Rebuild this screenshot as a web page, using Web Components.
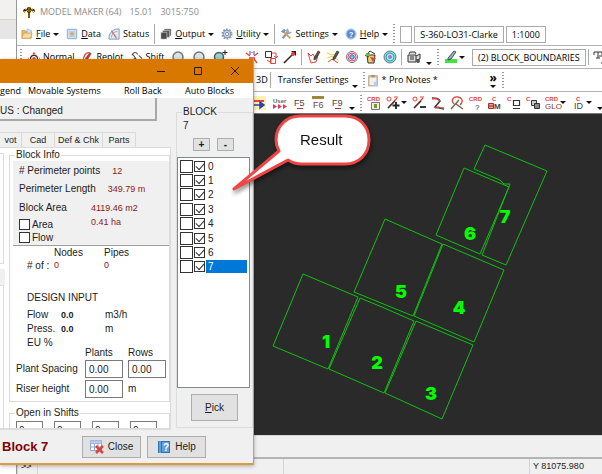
<!DOCTYPE html>
<html lang="en">
<head>
<meta charset="utf-8">
<title>MODEL MAKER (64)</title>
<style>
html,body{height:100%;margin:0}
body{overflow:hidden;background:#fff;color:#1c1c1c;font:10px/12px "Liberation Sans",Arial,sans-serif;--ui:9px/12px "Open Sans","Noto Sans",sans-serif}
</style>
</head>
<body>
<desk-top></desk-top>
<script>
const define = (name, html, setup) => {
  const tpl = document.createElement('template');
  tpl.innerHTML = '<style>*{box-sizing:border-box}</style>' + html;
  customElements.define(name, class extends HTMLElement {
    constructor() {
      super();
      this.attachShadow({mode: 'open'}).append(tpl.content.cloneNode(true));
    }
    connectedCallback() { if (setup) setup(this, this.shadowRoot); }
  });
};

const pencil = '<path d="M7 8 11 1l2 1-4 7-2 1z" fill="#555" stroke="#222" stroke-width=".6"/>';
const crd = '<text x="0" y="5" font-size="6" font-weight="700" fill="#e8443c">CRD</text>';
const cc = '<text x="0" y="5" font-size="6" font-weight="700" fill="#e8443c">C</text>';
const ICONS = {
  palm: '<path d="M6 5h2v8H6z" fill="#7a5a00"/><path d="M1 7c0-3 2-4 4-3C5 1 9 1 9 4c3-1 4 0 4 3-2-2-3-1-4-1 0 1-1 2-2 2S5 7 5 6C3 6 2 6 1 7z" fill="#2d2400"/><path d="M3 4l3 2M11 4 8 6M7 2v5M2 8l2-2M12 8l-2-2" stroke="#d9a000" fill="none"/>',
  folder: '<path d="M1 12V3h4l1 1h6v8z" fill="#e9b765" stroke="#c08a3c" stroke-width=".7"/><path d="M7 1l5 2v4H7z" fill="#cfe3f5" stroke="#7aa6cf" stroke-width=".6"/><path d="M1 12 3 6h10l-2 6z" fill="#fbdc9c" stroke="#c9984c" stroke-width=".7"/>',
  data: '<rect x="1.500" y="1.500" width="11" height="11" rx="1" fill="#d9e8f8" stroke="#7c9fcb"/><path d="M3 3h8v8H3z" fill="#b8d2f0"/><circle cx="7" cy="7" r="2" fill="#f5a430"/>',
  status: '<path d="M1 13A11 11 0 0 1 13 1v12z" fill="#dfeafa" stroke="#7293c0"/><path d="M4 11a7 7 0 0 1 7-7" fill="none" stroke="#8aa9d4"/><path d="M4 3l6 9" stroke="#e06a5c" stroke-width="1.500"/>',
  output: '<path d="M5 1h8v8H5z" fill="#777"/><path d="M3 3h8v8H3z" fill="#555" stroke="#ddd" stroke-width=".6"/><path d="M1 5h7v8H1z" fill="#4a4a4a" stroke="#eee" stroke-width=".6"/>',
  gear: '<circle cx="7" cy="7" r="5.500" fill="none" stroke="#8798b3" stroke-width="2" stroke-dasharray="2 1.450"/><circle cx="7" cy="7" r="4.500" fill="#c8d6ea" stroke="#7186a6"/><circle cx="7" cy="7" r="2" fill="#fff" stroke="#7186a6"/>',
  tools: '<path d="M3 12 10 4" stroke="#7f96b5" stroke-width="2.500"/><path d="M9 1a3 3 0 1 0 4 4l-2 0-1-1z" fill="#9fb3cd" stroke="#6d83a4" stroke-width=".5"/><path d="M4 4l8 8" stroke="#d99c4e" stroke-width="2"/><path d="M1 4l4-3 2 2-3 3z" fill="#8495ac"/>',
  help: '<circle cx="7" cy="7" r="6" fill="#8fb2e2" stroke="#b9cbe4"/><circle cx="7" cy="7" r="4.500" fill="#5785cc"/><text x="7" y="10" text-anchor="middle" font-size="9" font-weight="700" fill="#fff">?</text>',
  normal: '<circle cx="7" cy="9" r="4" fill="none" stroke="#333" stroke-width="1.500"/><circle cx="7" cy="9" r="2" fill="#e8443c"/><path d="M7 1 9 4H5zM1 7v4l-1-2zM13 7v4l1-2z" fill="#e8443c"/>',
  replot: '<path d="M3 12C2 6 6 1 10 2" fill="none" stroke="#e8443c" stroke-width="1.500"/><path d="M5 9 10 2l2 1-5 8z" fill="#c33" stroke="#333" stroke-width=".5"/>',
  shift: '<path d="M1 5c2-4 5-4 7-1M3 8l8 5M2 4l4 5M9 5l4 4" fill="none" stroke="#555" stroke-width="1.200"/>',
  lens: '<circle cx="7" cy="7" r="5" fill="#d6e6e6" stroke="#777" stroke-width="1.500"/>',
  lensplus: '<circle cx="6" cy="7" r="4.500" fill="#8fd3d3" stroke="#555" stroke-width="1.500"/><path d="M12 0v5M9.500 2.500h5" stroke="#222"/>',
  burst: '<path d="M1 3l4 3M13 3 9 6M2 13l3-4M12 13l-3-4M4 8h6" stroke="#e8443c" fill="none" stroke-width="1.300"/><path d="M5 1v4M9 1v4M7 2v1" stroke="#3c48d8"/>',
  copybox: '<path d="M1.500 1.500h6v6h-6z" fill="#fff" stroke="#333"/><path d="M8 3h4v4M12 8l-2-2M12 8l2-2M6.500 8.500h5v5h-5z" fill="none" stroke="#e8443c"/><path d="M7 9v4M3 10l3 2" stroke="#e8443c"/>',
  arrow: '<path d="M1 13 10 4" stroke="#222" stroke-width="1.500"/><path d="M13 1v5L8 1z" fill="#222"/><circle cx="10" cy="4" r="2" fill="#e8443c"/><path d="M1 11l2 2" stroke="#e8443c"/>',
  poly: '<path d="M1 3l3 3 2-2 2 4 3-3-2 7-5 1z" fill="none" stroke="#e8443c"/>' + pencil,
  lines: '<path d="M1 3l5 2 6-2M1 8l5-2 6 4" stroke="#e8d23c" fill="none"/><path d="M2 12l4-3 6 4" stroke="#e8443c" fill="none"/>' + pencil,
  target: '<circle cx="7" cy="7" r="5.500" fill="#fff" stroke="#806a90"/><circle cx="7" cy="7" r="4" fill="none" stroke="#e8443c"/><circle cx="7" cy="7" r="2.300" fill="#7fb8f0" stroke="#3c60c8"/>',
  bucket: '<path d="M3 5h8l-1 8H4z" fill="#e6d069" stroke="#333"/><path d="M3 4l3-3 5 3M1 5l4 2" stroke="#333" fill="none"/><path d="M6 7l6 1-3 4z" fill="#e8443c"/><path d="M2 3h4v3H2z" fill="#79b04c"/>',
  disc: '<circle cx="7" cy="7" r="6" fill="#71dcd4" stroke="#6a7f88"/><circle cx="7" cy="7" r="4" fill="#a9ecdf" stroke="#459ec4"/><circle cx="7" cy="7" r="2" fill="#9c7be0"/>',
  camera: '<path d="M1 5h8v7H1zM2 4l1-2h5l1 2M9 6l4-2v5l-4 1" fill="#ddd" stroke="#333"/><path d="M3 7h4M3 9h4" stroke="#333"/><circle cx="11" cy="11" r="2" fill="#555"/>',
  pen: '<path d="M1 9h12v4H1z" fill="#3ee63e"/><path d="M4 8 10 1l2 1-5 7-3 1z" fill="#9ab" stroke="#334" stroke-width=".8"/>',
  tt: '<path d="M1 2h8v3M1 2v3M5 2v6M3 8h4M6 6h7M10 6v7M8 13h4" stroke="#333" fill="none"/>',
  clip: '<rect x="2" y="2" width="10" height="12" fill="#e0b47c" stroke="#b58b56" stroke-width=".7"/><path d="M3 4h8v9H3z" fill="#eef3fa"/><path d="M5 1h4v3H5z" fill="#8b9bb0"/><path d="M8 9h4v5H8z" fill="#b9cdea"/>',
  swap: '<path d="M0 0h12v14H0z" fill="#fff3b0"/><path d="M0 5h10" stroke="#e8443c" stroke-width="2"/><path d="M0 9h7M6 6l4 3-4 3z" stroke="#2c3fb8" stroke-width="1.500" fill="#2c3fb8"/>',
  user: '<text x="0" y="7" font-size="6" font-weight="700" fill="#666">User</text><path d="M0 8l4 2.500L0 13zM5 8l4 2.500L5 13zM10 8l4 2.500-4 2.500z" fill="#e8345c"/>',
  f5: '<text x="2" y="10" font-size="9" fill="#444">F5</text><path d="M5 12.500h6" stroke="#a33"/>',
  f6: '<path d="M1 0h12v3H1z" fill="#9b8a3c"/><text x="2" y="12" font-size="9" fill="#744">F6</text>',
  f9: '<text x="2" y="10" font-size="9" fill="#444">F9</text><path d="M5 12.500h6" stroke="#a33"/>',
  crdbox: crd + '<path d="M4.500 6.500h8v7h-8z" fill="#eef" stroke="#776"/><path d="M7 8h3v4H7z" fill="#7a9a1c"/>',
  slashplus: '<path d="M2 12 11 2" stroke="#e8443c" stroke-width="1.300"/><circle cx="3" cy="3" r="2" fill="none" stroke="#e8443c"/><path d="M8 1h4" stroke="#e8443c"/><path d="M2 12 9 5" stroke="#333" stroke-width="1.300"/><path d="M10 6v7M6.500 9.500h7" stroke="#222" stroke-width="1.800"/>',
  slashminus: '<path d="M2 12 11 2" stroke="#e8443c" stroke-width="1.300"/><circle cx="3" cy="3" r="2" fill="none" stroke="#e8443c"/><path d="M8 1h4" stroke="#e8443c"/><path d="M2 12 9 5" stroke="#333" stroke-width="1.300"/><path d="M8 11h6" stroke="#222" stroke-width="1.800"/>',
  zig: '<path d="M1 2c4 0 7 0 8 3L4 11l9 2" stroke="#333" fill="none" stroke-width="1.500"/><path d="M1 3c3-1 6 0 8 2M4 12l4-1M10 12h3" stroke="#e8443c" fill="none" stroke-width="1.500"/>',
  loop: '<path d="M4 8C0 4 4 0 8 1s6 4 2 8" fill="none" stroke="#e8443c" stroke-width="1.300"/><path d="M1 13 9 4M6 8l7 5" stroke="#664" stroke-width="1.300"/>',
  ask: crd + '<text x="6" y="14" font-size="8" fill="#333">?</text>',
  bm: '<text x="4" y="5" font-size="6" font-weight="700" fill="#e8443c">C</text><path d="M.5 7.500h5v5h-5zM1 10h5" fill="#e99" stroke="#933"/><text x="6" y="13" font-size="8" font-weight="700" fill="#444">M</text>',
  cbox: cc + '<path d="M6.500 4.500h6v5h-6zM6 12.500h7" fill="none" stroke="#333" stroke-width="1.200"/>',
  cstack: cc + '<path d="M5.500 4.500h5v5h-5z" fill="#ccc" stroke="#333"/><path d="M8.500 7.500h5v5h-5z" fill="#888" stroke="#333"/>',
  glo: crd + '<text x="0" y="13" font-size="8" fill="#833">GLO</text>',
  cid: '<text x="5" y="5" font-size="6" font-weight="700" fill="#e8443c">C</text><text x="3" y="13" font-size="9" fill="#444">ID</text>',
  gridx: '<path d="M.5.500h11v10H.5zM.5 3.500h11M.5 7h11M4.500.500v10M8 .5v10" fill="#fff" stroke="#8aa4d6"/><path d="M.5.500h11v3H.5z" fill="#b9cbee"/><path d="M6 6l7 7M13 6l-7 7" stroke="#d6453c" stroke-width="2.500"/>',
  book: '<path d="M1 1h12v12H1z" fill="#2f74b8"/><path d="M3 1v12" stroke="#9cc4ea"/><path d="M5 2h7v10H5z" fill="#5f9fdb"/><text x="9" y="11" text-anchor="middle" font-size="10" font-weight="700" fill="#fff">?</text>'
};

define('ui-icon', `<style>
  :host{display:inline-block;flex:none;width:14px;height:14px}
  svg{display:block;width:100%;height:100%;overflow:visible;font-family:"Liberation Sans",Arial,sans-serif}
</style><svg viewBox="0 0 14 14" aria-hidden="true"></svg>`,
(el, root) => { root.querySelector('svg').innerHTML = ICONS[el.getAttribute('name')] || ''; });

define('menu-button', `<style>
  :host{display:block;flex:none}
  ::slotted(ui-icon){width:12px}
  button{display:flex;align-items:center;gap:3px;border:0;background:none;padding:0;margin:0;font:inherit;color:inherit;white-space:nowrap}
  i{display:none;border:3px solid transparent;border-top-color:#111;border-bottom:0}
  :host([drop]) i{display:block}
</style><button type="button"><slot name="icon"></slot><span><slot></slot></span><i></i></button>`);

define('tool-button', `<style>
  :host{display:block;flex:none;width:19px}
  :host([drop]){width:26px}
  button{display:flex;align-items:center;justify-content:center;gap:1px;width:100%;border:0;background:none;padding:0;margin:0}
  i{display:none;border:3px solid transparent;border-top-color:#111;border-bottom:0}
  :host([drop]) i{display:block}
</style><button type="button"><ui-icon></ui-icon><i></i></button>`,
(el, root) => {
  const icon = document.createElement('ui-icon');
  icon.setAttribute('name', el.getAttribute('icon'));
  root.querySelector('ui-icon').replaceWith(icon);
  root.querySelector('button').setAttribute('aria-label', el.getAttribute('icon'));
});

define('tool-sep', `<style>
  :host{display:block;flex:none;width:1px;height:16px;background:#aaa;margin:0 2px}
  :host([grip]){width:2px;background:repeating-linear-gradient(#999 0 1px,transparent 1px 3px);}
</style>`);

define('tool-more', `<style>
  :host{display:block;flex:none;align-self:flex-end;margin-bottom:3px;width:12px;padding-left:3px}
  i{display:block;width:0;border:3px solid transparent;border-top-color:#111;border-bottom:0}
</style><i></i>`);

define('tool-bar', `<style>
  :host{display:flex;align-items:center;height:23px;border-bottom:1px solid #b4b4b4;overflow:hidden;background:#fff;font:var(--ui);color:#000}
</style><slot></slot>`);

define('map-canvas', `<style>
  :host{display:block;flex:1;min-height:0;background:#2a2a2a;overflow:hidden}
  svg{display:block;width:100%;height:100%}
  polygon{fill:none;stroke:#10c010;stroke-width:1}
  text{fill:#0f0;font:900 18px Inter,"Liberation Sans",Arial,sans-serif;text-anchor:middle}
</style>
<svg role="img" aria-label="Block boundaries"><g transform="translate(-17 -114)">
  <polygon points="303,274 358,297 328,369 273,346"/>
  <polygon points="360,298 382,307 414,321 384,393 329,369"/>
  <polygon points="416,321 473,345 442,419 385,393"/>
  <polygon points="443,244 504,270 474,342 414,316"/>
  <polygon points="385,219 442,244 413,316 354,292"/>
  <polygon points="464,168 509,187 480,254 436,235"/>
  <polygon points="485,145 547,171 506,265 482,255 510,184 504,184 500,180 474,169"/>
  <text x="326" y="348">1</text><text x="377" y="369">2</text><text x="431" y="400">3</text>
  <text x="459" y="314">4</text><text x="401" y="298">5</text><text x="470" y="240">6</text><text x="505" y="223">7</text>
</g></svg>`);

define('status-bar', `<style>
  :host{display:block;flex:none;background:#f0f0f0}
  .msg{height:24px;border-top:1px solid #d8d8d8;border-bottom:2px solid #b4b4b4}
  .cells{display:grid;grid-template-columns:20px 246px 1fr 73px;height:15px;font-size:9px;line-height:15px}
  span{padding-left:3px;border-left:1px solid #d4d4d4;white-space:nowrap}
</style><div class="msg"></div><div class="cells"><span>&gt;&gt;</span><span></span><span></span><span>Y 81075.980</span></div>`);

define('main-window', `<style>
  :host{display:flex;flex-direction:column;border-left:1px solid #999;background:#fff;min-width:0}
  header{display:flex;align-items:center;gap:8px;height:23px;padding-left:5px;color:#8c8c8c;font:var(--ui)}
  header ui-icon{margin-right:-4px}
  .menu{gap:7px;padding-left:4px}
  .menu tool-sep{height:20px;margin:0 -2px}
  output{display:block;flex:none;border:1px solid #aaa;padding:0 5px;height:17px;line-height:15px;white-space:nowrap}
  .boxes{display:flex;gap:2px}
  .push{flex:none;width:234px}
  .left{display:flex;flex:none;align-items:center;gap:7px;width:225px;padding-left:1px}
  .left tool-sep{margin:0 -1px 0 2px}
  .notes{width:120px}
  .edit{height:22px;border-bottom:1px solid #777}
  .gap{width:5px;flex:none}
  i{display:block;width:0;border:3px solid transparent;border-top-color:#111;border-bottom:0}
  .more{border:0;background:none;padding:0;font:700 12px/10px "Open Sans","Noto Sans",sans-serif;display:grid;justify-items:center;gap:2px;width:13px}
</style>
<header><ui-icon name="palm"></ui-icon><span>MODEL MAKER (64)</span><span>15.01</span><span>3015:750</span></header>
<tool-bar class="menu">
  <menu-button drop><ui-icon slot="icon" name="folder"></ui-icon><u>F</u>ile</menu-button>
  <menu-button><ui-icon slot="icon" name="data"></ui-icon><u>D</u>ata</menu-button>
  <menu-button><ui-icon slot="icon" name="status"></ui-icon>Status</menu-button>
  <tool-sep></tool-sep>
  <menu-button drop><ui-icon slot="icon" name="output"></ui-icon><u>O</u>utput</menu-button>
  <menu-button drop><ui-icon slot="icon" name="gear"></ui-icon><u>U</u>tility</menu-button>
  <tool-sep></tool-sep>
  <menu-button drop><ui-icon slot="icon" name="tools"></ui-icon>Settings</menu-button>
  <menu-button drop><ui-icon slot="icon" name="help"></ui-icon><u>H</u>elp</menu-button>
  <tool-sep grip></tool-sep>
  <div class="boxes"><output></output><output>S-360-LO31-Clarke</output><output>1:1000</output></div>
</tool-bar>
<tool-bar>
  <div class="left"><tool-sep grip></tool-sep>
    <menu-button><ui-icon slot="icon" name="normal"></ui-icon>Normal</menu-button>
    <menu-button><ui-icon slot="icon" name="replot"></ui-icon>Replot</menu-button>
    <menu-button><ui-icon slot="icon" name="shift"></ui-icon>Shift</menu-button>
    <ui-icon name="lens"></ui-icon><ui-icon name="lens"></ui-icon><ui-icon name="lensplus"></ui-icon></div>
  <tool-button icon="burst"></tool-button><tool-button icon="copybox"></tool-button><tool-button icon="arrow"></tool-button>
  <tool-sep></tool-sep>
  <tool-button icon="poly"></tool-button><tool-button icon="lines"></tool-button><tool-button icon="target"></tool-button><tool-button icon="bucket"></tool-button><tool-button icon="disc"></tool-button>
  <tool-sep></tool-sep>
  <tool-button icon="camera"></tool-button><tool-more></tool-more>
  <tool-sep grip></tool-sep>
  <tool-button icon="pen" drop></tool-button><span class="gap"></span>
  <output>(2) BLOCK_BOUNDARIES</output><tool-sep></tool-sep><tool-button icon="tt"></tool-button>
</tool-bar>
<tool-bar><span class="push"></span><span class="gap"></span>
  <menu-button>3D</menu-button><tool-sep></tool-sep><span class="gap"></span>
  <menu-button>Transfer Settings</menu-button><tool-more></tool-more><tool-sep grip></tool-sep>
  <menu-button class="notes"><ui-icon slot="icon" name="clip"></ui-icon>* Pro Notes *</menu-button>
  <button class="more" aria-label="More">»<i></i></button><tool-sep grip></tool-sep>
</tool-bar>
<tool-bar class="edit"><span class="push"></span>
  <tool-button icon="swap"></tool-button><tool-button icon="user"></tool-button><tool-button icon="f5"></tool-button><tool-button icon="f6"></tool-button><tool-button icon="f9"></tool-button>
  <tool-more></tool-more><tool-sep grip></tool-sep>
  <tool-button icon="crdbox"></tool-button><tool-button icon="slashplus" drop></tool-button><tool-button icon="slashminus"></tool-button><tool-button icon="zig"></tool-button><tool-button icon="loop"></tool-button><tool-button icon="ask"></tool-button><tool-button icon="bm"></tool-button><tool-button icon="cbox"></tool-button><tool-button icon="cstack"></tool-button><tool-button icon="glo" drop></tool-button><tool-button icon="cid" drop></tool-button><tool-more></tool-more>
</tool-bar>
<map-canvas></map-canvas>
<status-bar></status-bar>`);

define('group-box', `<style>
  :host{display:block;min-width:0}
  fieldset{margin:0;padding:0;border:1px solid #dcdcdc;min-width:0;height:100%}
  legend{margin-left:5px;padding:0 1px;line-height:12px}
</style><fieldset><legend><slot name="title"></slot></legend><slot></slot></fieldset>`);

const CHECK = `input[type=checkbox]{appearance:none;flex:none;width:11px;height:11px;margin:0;border:1px solid #333;background:#fff}
  input[type=checkbox]:checked::after{content:"";display:block;width:7px;height:4px;margin:1px;border:solid #333;border-width:0 0 1px 1px;transform:rotate(-48deg)}`;
const BUTTON = `button{display:flex;align-items:center;justify-content:center;gap:4px;border:1px solid #adadad;background:#e1e1e1;padding:0;margin:0;font:inherit;color:inherit}`;

define('block-info', `<style>
  :host{display:block}
  ${CHECK}
  .facts{display:grid;grid-template-rows:19px 17px 21px 13px 13px;background:#f0f0f0;border-bottom:1px solid #a0a0a0;margin-left:3px;padding:0 0 1px 6px}
  .facts div{display:flex;align-items:center;gap:12px;white-space:nowrap}
  .facts label{display:flex;align-items:center;gap:2px}
  .wide{min-width:60px}
  .val{color:#8b1a1a;font-size:9px}
  .up{padding-bottom:6px}
  .count,.design{display:grid;padding-left:17px}
  .count{grid-template-columns:27px 50px 1fr;line-height:13px}
  .design{grid-template-columns:34px 44px 1fr;grid-template-rows:17px;grid-auto-rows:14px;margin-top:19px;line-height:14px}
  .design b{font-size:9px}
  .head{grid-column:1/-1}
  .space{display:grid;grid-template-columns:64px 38px 38px;gap:2px 5px;grid-template-rows:11px 18px 18px;align-items:center;margin-top:-3px;padding:0 0 3px 6px;white-space:nowrap}
  .space input{width:38px;height:18px;border:1px solid #7a7a7a;padding:0 3px;font:inherit;color:inherit;background:#fff}
</style>
<div class="facts">
  <div><span># Perimeter points</span><span class="val">12</span></div>
  <div><span>Perimeter Length</span><span class="val">349.79 m</span></div>
  <div><span class="wide">Block Area</span><span class="val">4119.46 m2</span></div>
  <div><label class="wide"><input type="checkbox">Area</label><span class="val up">0.41 ha</span></div>
  <div><label><input type="checkbox">Flow</label></div>
</div>
<div class="count"><span></span><span>Nodes</span><span>Pipes</span><span># of :</span><span class="val">0</span><span class="val">0</span></div>
<div class="design"><span class="head">DESIGN INPUT</span><span>Flow</span><b>0.0</b><span>m3/h</span><span>Press.</span><b>0.0</b><span>m</span><span>EU&nbsp;%</span></div>
<div class="space"><span></span><span>Plants</span><span>Rows</span><label for="p">Plant Spacing</label><input id="p" value="0.00"><input aria-label="Rows" value="0.00"><label for="r">Riser height</label><input id="r" value="0.00"><span>m</span></div>`);

define('shift-fields', `<style>
  :host{display:flex;gap:11px;padding:2px 0 0 6px}
  input{width:27px;height:18px;border:1px solid #7a7a7a;padding:0 2px;font:inherit;color:inherit;background:#fff}
</style><input aria-label="Shift 1" value="0"><input aria-label="Shift 2" value="0"><input aria-label="Shift 3" value="0"><input aria-label="Shift 4" value="0">`);

define('block-list', `<style>
  :host{display:block;background:#fff;border:1px solid #828790;padding:1px 2px}
  ul{list-style:none;margin:0;padding:0;display:grid;grid-template-rows:repeat(8,1fr);height:115px}
  li{display:flex;align-items:center;gap:1px}
  ${CHECK}
  input.pick[type=checkbox]{width:13px;height:13px}
  label{flex:1;padding-left:2px;line-height:13px}
  .on label{background:#0078d7;color:#fff}
</style><ul></ul>`,
(el, root) => {
  root.querySelector('ul').innerHTML = [0,1,2,3,4,5,6,7].map(n =>
    `<li${n === 7 ? ' class="on"' : ''}><input class="pick" type="checkbox" aria-label="Pick ${n}"><input id="b${n}" type="checkbox" checked><label for="b${n}">${n}</label></li>`).join('');
});

define('block-dialog', `<style>
  :host{display:flex;flex-direction:column;background:#f0f0f0;border:solid #dc9a3c;border-width:0 1px 2px 0;box-shadow:0 1px 4px rgba(0,0,0,.3);overflow:hidden}
  ${BUTTON}
  .title{display:flex;justify-content:flex-end;gap:24px;height:24px;padding-right:12px;align-items:center;background:#d87800}
  .title button{border:0;background:none;width:13px}
  .title svg{display:block;width:10px;height:10px;fill:none;stroke:#2b1a00}
  .menu{display:grid;grid-template-columns:28px 96px 61px 1fr;background:#fff;height:15px;padding-top:2px;font:var(--ui);color:#000;white-space:nowrap}
  .body{display:grid;grid-template-columns:171px 1fr;column-gap:5px;height:332px}
  .left{display:flex;flex-direction:column;min-width:0;min-height:0}
  .state{width:157px;height:23px;line-height:25px;border:solid #a8a8a8;border-width:0 2px 2px 0}
  .tabs{display:flex;height:15px;margin-top:11px;font-size:9px}
  .tabs button{width:33px;border:1px solid #d9d9d9;border-width:1px 1px 0 0;background:#f0f0f0;white-space:nowrap}
  .tabs button:first-child{width:22px}
  .tabs button:nth-child(3){width:48px}
  .page{flex:1;min-height:0;display:grid;grid-template-columns:5px 1fr;column-gap:4px;background:#fff;border:solid #dcdcdc;border-width:1px 1px 2px 0;overflow:hidden}
  .stub{display:grid;grid-template-rows:5px 111px 5px 16px 1fr;}
  .stub i{border:1px solid #dcdcdc;border-left:0;margin-right:1px}
  .stub b{background:#f0f0f0}
  .groups{min-width:0;padding-top:1px}
  .groups group-box+group-box{margin-top:5px;height:40px}
  .right{margin-top:8px;height:322px}
  .num{padding:1px 0 0 6px;height:20px;line-height:14px}
  .pm{display:flex;gap:7px;padding-left:16px}
  .pm button{width:17px;height:13px;font-weight:700}
  block-list{height:231px;margin:6px 2px 6px 0}
  .pick{width:47px;height:27px;margin-left:14px}
  footer{display:flex;align-items:center;gap:6px;padding-left:2px;flex:1}
  footer strong{color:#800000;font-size:13px;width:74px;white-space:nowrap}
  footer button{width:59px;height:22px}
</style>
<div class="title">
  <button aria-label="Minimize"><svg viewBox="0 0 10 10"><path d="M1 5.500h8"/></svg></button>
  <button aria-label="Maximize"><svg viewBox="0 0 10 10"><path d="M1.500 1.500h7v7h-7z"/></svg></button>
  <button aria-label="Close window"><svg viewBox="0 0 10 10"><path d="M1 1l8 8M9 1 1 9"/></svg></button>
</div>
<div class="menu"><menu-button>gend</menu-button><menu-button>Movable Systems</menu-button><menu-button>Roll Back</menu-button><menu-button>Auto Blocks</menu-button></div>
<div class="body">
  <div class="left">
    <div class="state">US : Changed</div>
    <div class="tabs"><button>vot</button><button>Cad</button><button>Def &amp; Chk</button><button>Parts</button></div>
    <div class="page">
      <div class="stub"><span></span><i></i><span></span><b></b><i></i></div>
      <div class="groups">
        <group-box><span slot="title">Block Info</span><block-info></block-info></group-box>
        <group-box><span slot="title">Open in Shifts</span><shift-fields></shift-fields></group-box>
      </div>
    </div>
  </div>
  <group-box class="right"><span slot="title">BLOCK</span>
    <div class="num">7</div>
    <div class="pm"><button>+</button><button>-</button></div>
    <block-list></block-list>
    <button class="pick"><span><u>P</u>ick</span></button>
  </group-box>
</div>
<footer><strong>Block 7</strong><button><ui-icon name="gridx"></ui-icon>Close</button><button><ui-icon name="book"></ui-icon>Help</button></footer>`);

define('call-out', `<style>
  :host{display:grid;width:150px;height:85px;filter:drop-shadow(1px 3px 2px rgba(0,0,0,.45))}
  svg,span{grid-area:1/1}
  svg{width:150px;height:85px;overflow:visible}
  path{fill:#fff;stroke:#ef4545;stroke-width:3;stroke-linejoin:round}
  span{font-size:15px;line-height:20px;padding:20px 0 0 70px;color:#111}
</style>
<svg viewBox="0 0 150 85" aria-hidden="true"><path d="M70 6H115C129 6 139 16 139 30S129 54 115 54H72Q64 54 58 50L4 79 49 41Q46 36 46 30C46 16 57 6 70 6z"/></svg><span><slot></slot></span>`);

define('desk-top', `<style>
  :host{display:grid;grid-template-columns:16px 1fr;height:100vh;position:relative;overflow:hidden}
  .behind{background:linear-gradient(#f3f1f0 0 19px,#d4d4d4 19px 20px,#e6e6e6 20px 39px,#fff 39px)}
  block-dialog{position:absolute;left:0;top:59px;width:254px;height:406px}
  call-out{position:absolute;left:230px;top:110px}
</style>
<div class="behind"></div><main-window></main-window>
<block-dialog></block-dialog><call-out>Result</call-out>`);
</script>
</body>
</html>
